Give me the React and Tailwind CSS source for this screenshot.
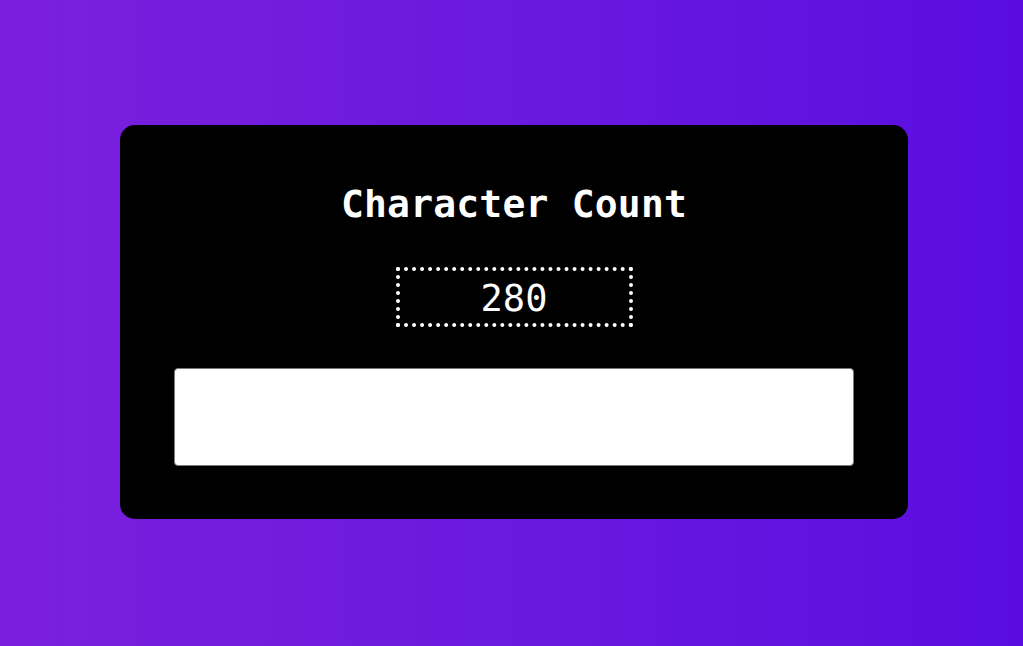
import React, { useState } from 'react';

const mono = { fontFamily: '"DejaVu Sans Mono", "Liberation Mono", monospace' };

const App = () => {
  const [text, setText] = useState('');
  const remaining = 280 - text.length;

  return (
    <div className="min-h-screen w-full flex items-center justify-center pl-[5px] pb-[2px] bg-gradient-to-r from-[#7b1fdc] to-[#5a0ce0]">
      <div className="w-[788px] h-[394px] bg-black rounded-[15px] px-[54px] pt-[57px] pb-[53px] flex flex-col items-center">
        <h1 className="text-[38px] leading-[44px] font-bold text-white tracking-[0.2px]" style={mono}>
          Character Count
        </h1>
        <div
          className="mt-[41px] w-[237px] h-[60px] border-4 border-dotted border-white text-white text-[37px] leading-[43px] text-center pt-[6px]"
          style={mono}
        >
          {remaining}
        </div>
        <textarea
          value={text}
          onChange={(e) => setText(e.target.value)}
          maxLength={280}
          className="mt-[41px] w-full h-[98px] bg-white border border-[#7a7a7a] rounded-[4px] resize-none outline-none p-2"
        />
      </div>
    </div>
  );
};

export default App;
